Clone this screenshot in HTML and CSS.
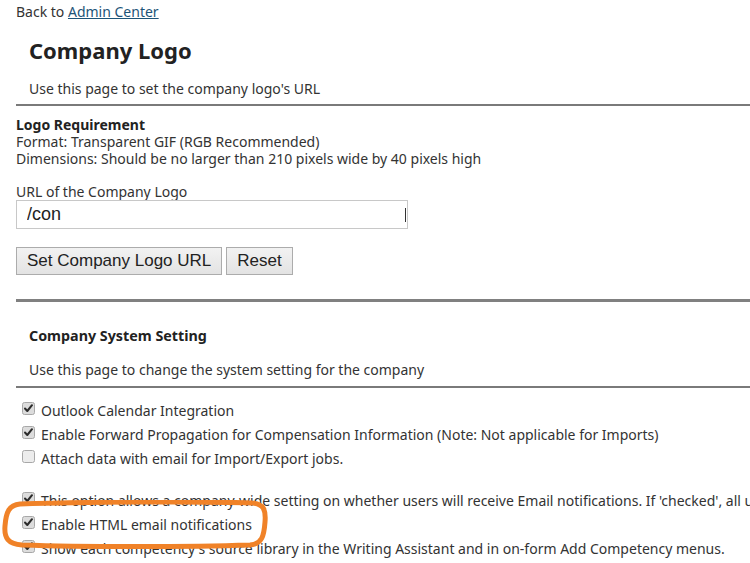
FILE: index.html
```html
<!DOCTYPE html>
<html>
<head>
<meta charset="utf-8">
<link rel="stylesheet" href="styles.css">
</head>
<body>
<div class="page">
  <div class="back">Back to <a href="#" class="link">Admin Center</a></div>
  <h1 class="title">Company Logo</h1>
  <p class="desc">Use this page to set the company logo's URL</p>
  <div class="rule"></div>
  <div class="req">
    <div class="req-title">Logo Requirement</div>
    <div>Format: Transparent GIF (RGB Recommended)</div>
    <div>Dimensions: Should be no larger than 210 pixels wide by 40 pixels high</div>
  </div>
  <div class="label">URL of the Company Logo</div>
  <div class="field-wrap">
    <input class="field" type="text" value="/con">
    <span class="caret"></span>
  </div>
  <div class="buttons">
    <button class="btn">Set Company Logo URL</button>
    <button class="btn">Reset</button>
  </div>
  <div class="rule thick"></div>
  <h2 class="subtitle">Company System Setting</h2>
  <p class="desc desc2">Use this page to change the system setting for the company</p>
  <div class="rule rule3"></div>
  <ul class="opts">
    <li class="opt"><svg class="cb" viewBox="0 0 13 13"><rect x="0.5" y="0.5" width="12" height="12" rx="2" class="cb-box"/><path d="M3 6.5 L5.3 9 L10 3.2" class="cb-mark"/></svg><span>Outlook Calendar Integration</span></li>
    <li class="opt"><svg class="cb" viewBox="0 0 13 13"><rect x="0.5" y="0.5" width="12" height="12" rx="2" class="cb-box"/><path d="M3 6.5 L5.3 9 L10 3.2" class="cb-mark"/></svg><span>Enable Forward Propagation for Compensation Information (Note: Not applicable for Imports)</span></li>
    <li class="opt"><svg class="cb" viewBox="0 0 13 13"><rect x="0.5" y="0.5" width="12" height="12" rx="2" class="cb-box off"/></svg><span>Attach data with email for Import/Export jobs.</span></li>
  </ul>
  <ul class="opts opts2">
    <li class="opt"><svg class="cb" viewBox="0 0 13 13"><rect x="0.5" y="0.5" width="12" height="12" rx="2" class="cb-box"/><path d="M3 6.5 L5.3 9 L10 3.2" class="cb-mark"/></svg><span>This option allows a company-wide setting on whether users will receive Email notifications. If 'checked', all users will receive them</span></li>
    <li class="opt"><svg class="cb" viewBox="0 0 13 13"><rect x="0.5" y="0.5" width="12" height="12" rx="2" class="cb-box"/><path d="M3 6.5 L5.3 9 L10 3.2" class="cb-mark"/></svg><span>Enable HTML email notifications</span></li>
    <li class="opt"><svg class="cb" viewBox="0 0 13 13"><rect x="0.5" y="0.5" width="12" height="12" rx="2" class="cb-box"/><path d="M3 6.5 L5.3 9 L10 3.2" class="cb-mark"/></svg><span>Show each competency's source library in the Writing Assistant and in on-form Add Competency menus.</span></li>
    <li class="opt"><svg class="cb" viewBox="0 0 13 13"><rect x="0.5" y="0.5" width="12" height="12" rx="2" class="cb-box off"/></svg><span>Enable competency library</span></li>
  </ul>
</div>
<svg class="highlight" viewBox="0 0 270 50" width="270" height="50">
  <path d="M20 4 C 80 2, 200 1, 252 3 C 264 4, 266 10, 265 22 C 264 36, 262 44, 250 45 C 190 47, 80 47, 22 45 C 8 44, 4 38, 5 26 C 6 12, 9 5, 20 4 Z" class="hl-path"/>
</svg>
</body>
</html>
```
FILE: styles.css
```css
html, body {
  margin: 0;
  padding: 0;
  background: #ffffff;
  overflow: hidden;
}
body {
  width: 750px;
  height: 563px;
  position: relative;
  font-family: "Noto Sans", "Open Sans", sans-serif;
  font-size: 14px;
  color: #333333;
}
.page {
  padding-left: 16px;
  padding-top: 3px;
  overflow: hidden;
  height: 560px;
}
.back {
  line-height: 18px;
  color: #333;
}
.link {
  color: #1d5478;
  text-decoration: underline;
}
.title {
  margin: 15px 0 0 13px;
  font-size: 22px;
  font-weight: 700;
  line-height: 28px;
  color: #222;
}
.desc {
  margin: 15px 0 0 13px;
  line-height: 20px;
  color: #333;
}
.rule {
  height: 2px;
  background: #7a7a7a;
  margin-top: 5px;
}
.rule.thick {
  height: 3px;
  margin-top: 24px;
  background: #808080;
}
.rule.rule3 {
  margin-top: 6px;
}
.req {
  margin-top: 10px;
  line-height: 17px;
}
.req-title {
  font-weight: 700;
  color: #222;
}
.label {
  margin-top: 16px;
  line-height: 17px;
}
.field-wrap {
  position: relative;
  width: 392px;
  margin-top: 0;
}
.field {
  box-sizing: border-box;
  width: 392px;
  height: 29px;
  border: 1px solid #c8c8c8;
  padding: 0 10px;
  font-family: "Liberation Sans", Arial, sans-serif;
  font-size: 18px;
  color: #222;
  background: #fff;
  outline: none;
  display: block;
  margin: 0;
}
.caret {
  position: absolute;
  right: 2px;
  top: 8px;
  width: 1px;
  height: 14px;
  background: #333;
}
.buttons {
  display: flex;
  gap: 4px;
  margin-top: 18px;
}
.btn {
  box-sizing: border-box;
  height: 28px;
  padding: 0 10px;
  border: 1px solid #acacac;
  background: linear-gradient(#f2f2f2, #e3e3e3);
  font-family: "Liberation Sans", Arial, sans-serif;
  font-size: 17px;
  color: #222;
  margin: 0;
}
.subtitle {
  margin: 24px 0 0 13px;
  font-size: 14.3px;
  font-weight: 700;
  line-height: 20px;
  color: #222;
}
.desc2 {
  margin-top: 14px;
}
.opts {
  list-style: none;
  margin: 10px 0 0 0;
  padding: 0 0 0 6px;
}
.opts2 {
  margin-top: 18px;
}
.opt {
  display: flex;
  align-items: center;
  gap: 6px;
  height: 24px;
  white-space: nowrap;
}
.cb {
  width: 13px;
  height: 13px;
  flex: none;
  margin-top: -4px;
}
.cb-box {
  fill: #dcdcdc;
  stroke: #a8a8a8;
  stroke-width: 1;
}
.cb-box.off {
  fill: #ececec;
}
.cb-mark {
  fill: none;
  stroke: #2b2b2b;
  stroke-width: 2;
  stroke-linecap: round;
  stroke-linejoin: round;
}
.highlight {
  position: absolute;
  left: 0;
  top: 500px;
}
.hl-path {
  fill: none;
  stroke: #f08228;
  stroke-width: 5;
}
```
